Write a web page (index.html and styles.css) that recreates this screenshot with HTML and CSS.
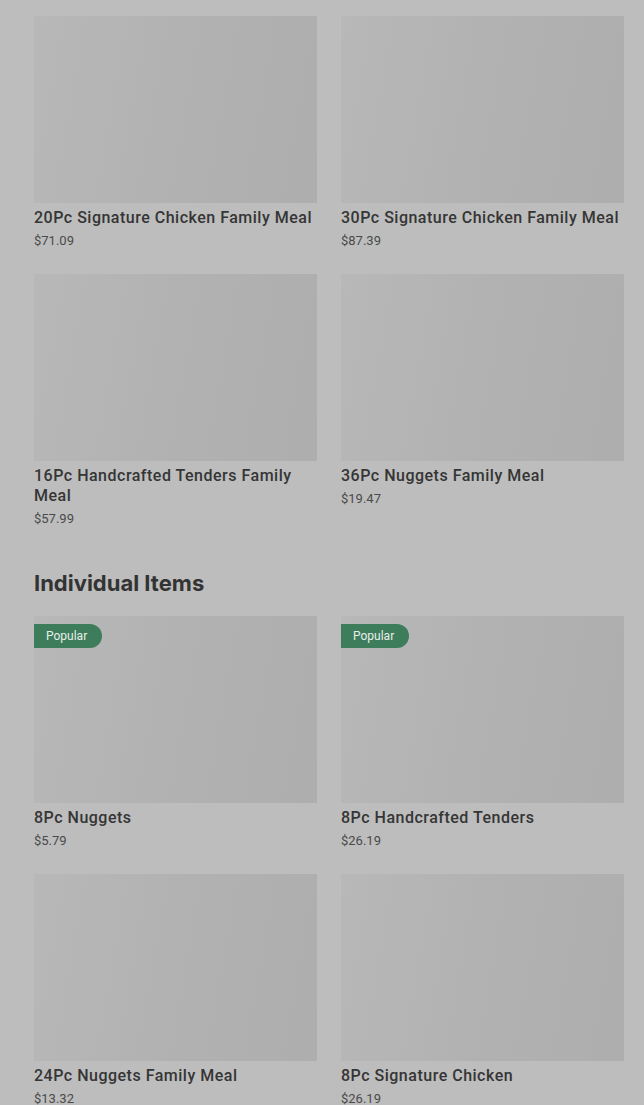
FILE: index.html
```html
<!DOCTYPE html>
<html>
<head>
<meta charset="utf-8">
<link rel="stylesheet" href="styles.css">
</head>
<body>
<main class="page">
  <section class="grid">
    <div class="card"><div class="img"></div><div class="title">20Pc Signature Chicken Family Meal</div><div class="price">$71.09</div></div>
    <div class="card"><div class="img"></div><div class="title">30Pc Signature Chicken Family Meal</div><div class="price">$87.39</div></div>
    <div class="card"><div class="img"></div><div class="title">16Pc Handcrafted Tenders Family Meal</div><div class="price">$57.99</div></div>
    <div class="card"><div class="img"></div><div class="title">36Pc Nuggets Family Meal</div><div class="price">$19.47</div></div>
  </section>
  <h2 class="heading">Individual Items</h2>
  <section class="grid">
    <div class="card"><div class="img"><span class="badge">Popular</span></div><div class="title">8Pc Nuggets</div><div class="price">$5.79</div></div>
    <div class="card"><div class="img"><span class="badge">Popular</span></div><div class="title">8Pc Handcrafted Tenders</div><div class="price">$26.19</div></div>
    <div class="card"><div class="img"></div><div class="title">24Pc Nuggets Family Meal</div><div class="price">$13.32</div></div>
    <div class="card"><div class="img"></div><div class="title">8Pc Signature Chicken</div><div class="price">$26.19</div></div>
  </section>
</main>
</body>
</html>
```
FILE: styles.css
```css
html, body {
  margin: 0;
  background: #bdbdbd;
}
body {
  font-family: "Roboto", "Liberation Sans", sans-serif;
  color: #333;
}
.page {
  padding: 16px 20px 0 34px;
}
.grid {
  display: grid;
  grid-template-columns: 283px 283px;
  column-gap: 24px;
  row-gap: 23px;
}
.card {
  display: flex;
  flex-direction: column;
}
.img {
  position: relative;
  height: 187px;
  background: linear-gradient(100deg, #b8b8b8 0%, #b2b2b2 45%, #aeaeae 100%);
  margin-bottom: 5px;
}
.title {
  font-size: 16px;
  line-height: 20px;
  font-weight: 500;
  color: #353535;
  letter-spacing: 0.5px;
}
.price {
  margin-top: 3px;
  font-size: 13px;
  line-height: 20px;
  color: #4a4a4a;
}
.heading {
  margin: 39px 0 18px;
  font-family: "Inter", "Liberation Sans", sans-serif;
  font-size: 22px;
  line-height: 30px;
  font-weight: 700;
  letter-spacing: 0;
  color: #333;
}
.badge {
  position: absolute;
  left: 0;
  top: 8px;
  height: 24px;
  line-height: 24px;
  padding: 0 15px 0 12px;
  background: #3d7d5c;
  color: #e8efe9;
  font-size: 12px;
  border-radius: 0 12px 12px 0;
}
```
